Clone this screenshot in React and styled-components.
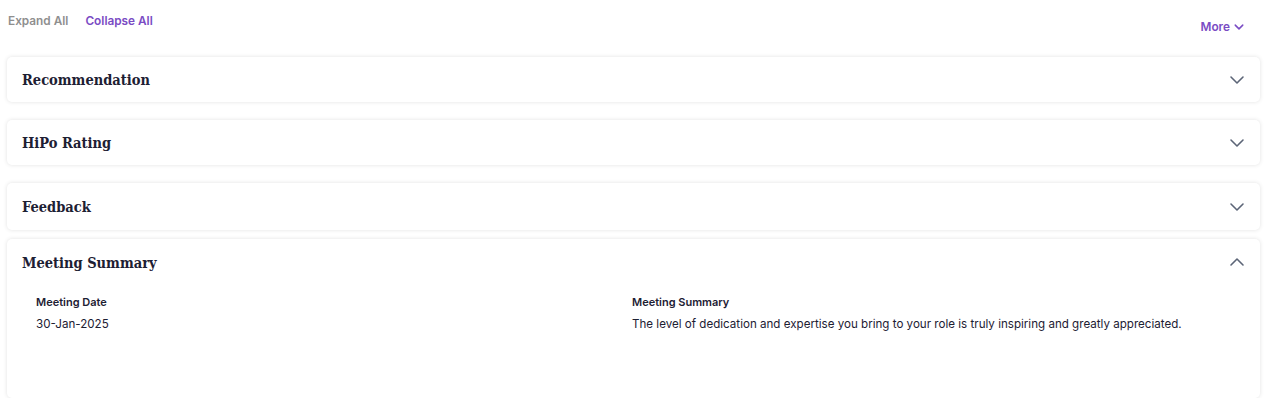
import React, { useState } from "react";
import styled, { createGlobalStyle } from "styled-components";

const GlobalStyle = createGlobalStyle`
  body {
    margin: 0;
    background: #fff;
    font-family: Inter, "Noto Sans", sans-serif;
  }
`;

const Page = styled.div`
  padding: 0 22px 0 7px;
`;

const Toolbar = styled.div`
  display: flex;
  justify-content: space-between;
  align-items: flex-start;
  height: 57px;
`;

const LinkGroup = styled.div`
  display: flex;
  gap: 17px;
  padding: 14px 0 0 1px;
`;

const LinkButton = styled.button`
  border: none;
  background: none;
  padding: 0;
  font-family: Inter, sans-serif;
  font-size: 11.8px;
  font-weight: 600;
  line-height: 14px;
  color: ${(p) => (p.active ? "#7a4cc4" : "#8f8f8f")};
  cursor: pointer;
`;

const MoreButton = styled(LinkButton)`
  display: flex;
  align-items: center;
  gap: 4px;
  margin: 20px 16px 0 0;
  color: #7a4cc4;
`;

const Card = styled.section`
  background: #fff;
  border-radius: 5px;
  box-shadow: 0 0 4px rgba(0, 0, 0, 0.12);
  margin-bottom: ${(p) => p.gap}px;
`;

const Header = styled.div`
  display: flex;
  justify-content: space-between;
  align-items: center;
  height: ${(p) => p.h}px;
  padding: 0 15px 0 15px;
  cursor: pointer;
`;

const Title = styled.h3`
  margin: 0;
  font-family: "DejaVu Serif", serif;
  font-stretch: condensed;
  font-size: 14.5px;
  font-weight: 700;
  color: #1d2033;
`;

const Body = styled.div`
  box-sizing: border-box;
  display: grid;
  grid-template-columns: 596px 1fr;
  padding: 10px 15px 0 29px;
  height: 113px;
`;

const Field = styled.div`
  display: flex;
  flex-direction: column;
  gap: 8px;
`;

const Label = styled.div`
  font-size: 11px;
  font-weight: 600;
  line-height: 14px;
  color: #1d2033;
`;

const Value = styled.div`
  font-size: 11.6px;
  line-height: 14px;
  color: #1d2033;
`;

const Chevron = ({ up, size = 16, color = "#5c6577", width = 1.6 }) => (
  <svg width={size} height={size} viewBox="0 0 16 16" fill="none">
    <path
      d={up ? "M2 11 L8 5 L14 11" : "M2 5 L8 11 L14 5"}
      stroke={color}
      strokeWidth={width}
      strokeLinecap="round"
      strokeLinejoin="round"
    />
  </svg>
);

const sections = [
  { id: "rec", title: "Recommendation", h: 45, gap: 18 },
  { id: "hipo", title: "HiPo Rating", h: 45, gap: 18 },
  { id: "fb", title: "Feedback", h: 47, gap: 9 },
  { id: "ms", title: "Meeting Summary", h: 46, gap: 0 },
];

export default function App() {
  const [open, setOpen] = useState({ ms: true });

  const toggle = (id) => setOpen((o) => ({ ...o, [id]: !o[id] }));

  return (
    <Page>
      <GlobalStyle />
      <Toolbar>
        <LinkGroup>
          <LinkButton onClick={() => setOpen({ rec: true, hipo: true, fb: true, ms: true })}>
            Expand All
          </LinkButton>
          <LinkButton active onClick={() => setOpen({})}>
            Collapse All
          </LinkButton>
        </LinkGroup>
        <MoreButton>
          More <Chevron size={10} color="#7a4cc4" width={2.4} />
        </MoreButton>
      </Toolbar>

      {sections.map((s) => (
        <Card key={s.id} gap={s.gap}>
          <Header h={s.h} onClick={() => toggle(s.id)}>
            <Title>{s.title}</Title>
            <Chevron up={open[s.id]} />
          </Header>
          {open[s.id] && s.id === "ms" && (
            <Body>
              <Field>
                <Label>Meeting Date</Label>
                <Value>30-Jan-2025</Value>
              </Field>
              <Field>
                <Label>Meeting Summary</Label>
                <Value>
                  The level of dedication and expertise you bring to your role is truly
                  inspiring and greatly appreciated.
                </Value>
              </Field>
            </Body>
          )}
        </Card>
      ))}
    </Page>
  );
}
